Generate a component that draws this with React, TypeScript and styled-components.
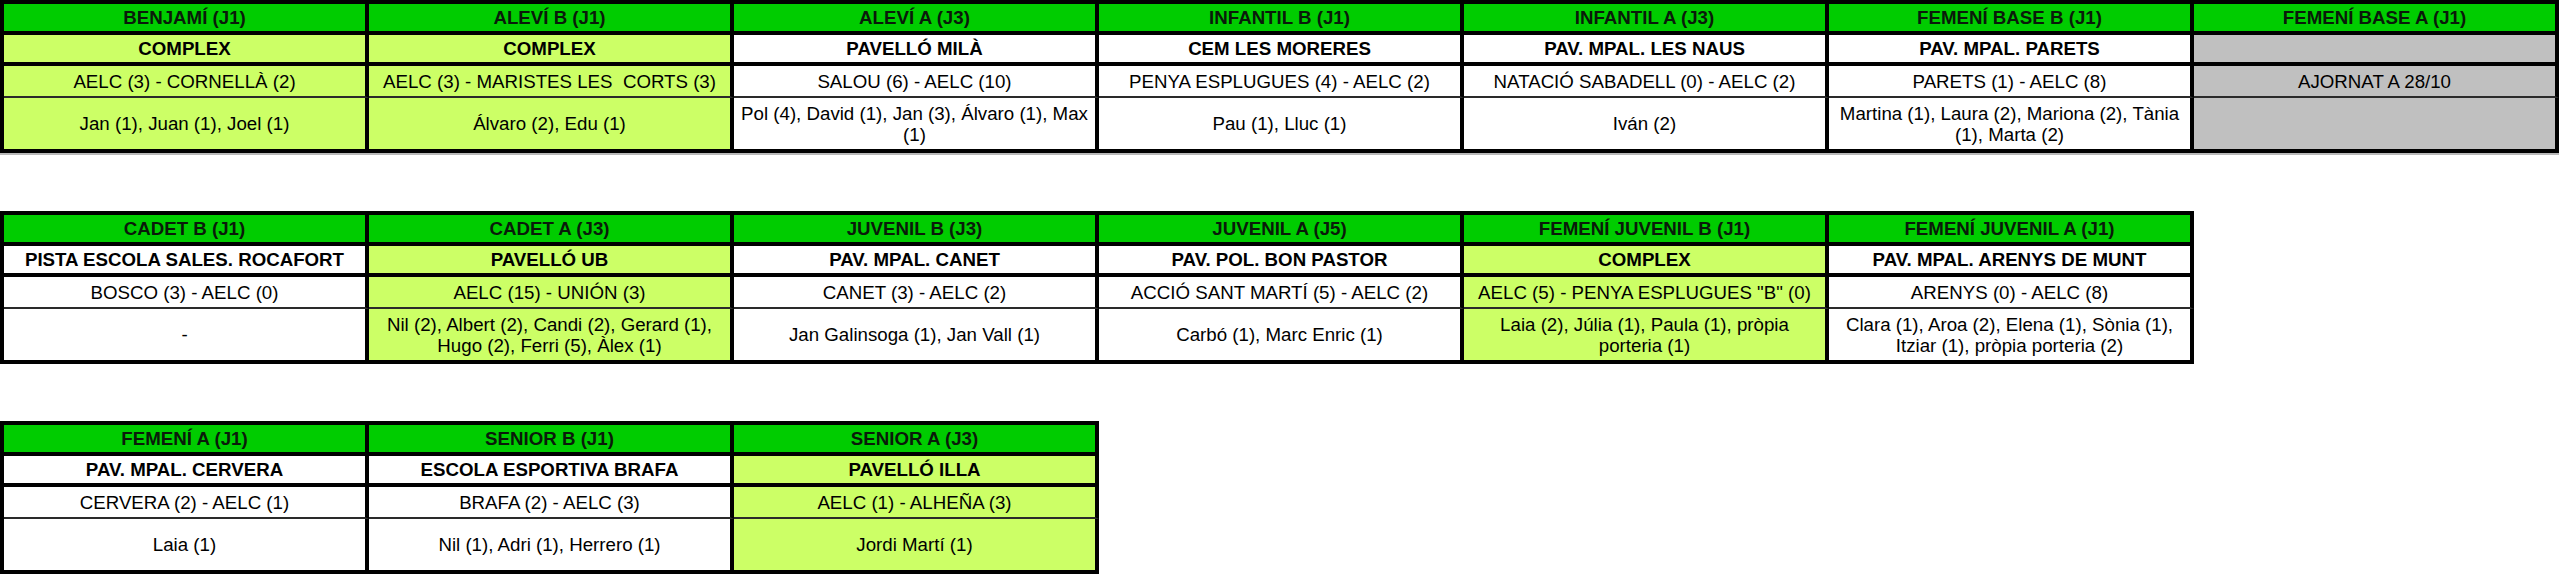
import React from "react";
import styled, { createGlobalStyle } from "styled-components";

type Tone = "white" | "lime" | "grey";

interface Match {
  title: string;
  venue: string;
  score: string;
  scorers: string;
  tone: Tone;
}

const tones: Record<Tone, string> = {
  white: "#ffffff",
  lime: "#ccff66",
  grey: "#c0c0c0",
};

const firstRound: Match[] = [
  { title: "BENJAMÍ (J1)", venue: "COMPLEX", score: "AELC (3) - CORNELLÀ (2)", scorers: "Jan (1), Juan (1), Joel (1)", tone: "lime" },
  { title: "ALEVÍ B (J1)", venue: "COMPLEX", score: "AELC (3) - MARISTES LES\u00a0 CORTS (3)", scorers: "Álvaro (2), Edu (1)", tone: "lime" },
  { title: "ALEVÍ A (J3)", venue: "PAVELLÓ MILÀ", score: "SALOU (6) - AELC (10)", scorers: "Pol (4), David (1), Jan (3), Álvaro (1), Max (1)", tone: "white" },
  { title: "INFANTIL B (J1)", venue: "CEM LES MORERES", score: "PENYA ESPLUGUES (4) - AELC (2)", scorers: "Pau (1), Lluc (1)", tone: "white" },
  { title: "INFANTIL A (J3)", venue: "PAV. MPAL. LES NAUS", score: "NATACIÓ SABADELL (0) - AELC (2)", scorers: "Iván (2)", tone: "white" },
  { title: "FEMENÍ BASE B (J1)", venue: "PAV. MPAL. PARETS", score: "PARETS (1) - AELC (8)", scorers: "Martina (1), Laura (2), Mariona (2), Tània (1), Marta (2)", tone: "white" },
  { title: "FEMENÍ BASE A (J1)", venue: "", score: "AJORNAT A 28/10", scorers: "", tone: "grey" },
];

const secondRound: Match[] = [
  { title: "CADET B (J1)", venue: "PISTA ESCOLA SALES. ROCAFORT", score: "BOSCO (3) - AELC (0)", scorers: "-", tone: "white" },
  { title: "CADET A (J3)", venue: "PAVELLÓ UB", score: "AELC (15) - UNIÓN (3)", scorers: "Nil (2), Albert (2), Candi (2), Gerard (1), Hugo (2), Ferri (5), Àlex (1)", tone: "lime" },
  { title: "JUVENIL B (J3)", venue: "PAV. MPAL. CANET", score: "CANET (3) - AELC (2)", scorers: "Jan Galinsoga (1), Jan Vall (1)", tone: "white" },
  { title: "JUVENIL A (J5)", venue: "PAV. POL. BON PASTOR", score: "ACCIÓ SANT MARTÍ (5) - AELC (2)", scorers: "Carbó (1), Marc Enric (1)", tone: "white" },
  { title: "FEMENÍ JUVENIL B (J1)", venue: "COMPLEX", score: "AELC (5) - PENYA ESPLUGUES \"B\" (0)", scorers: "Laia (2), Júlia (1), Paula (1), pròpia porteria (1)", tone: "lime" },
  { title: "FEMENÍ JUVENIL A (J1)", venue: "PAV. MPAL. ARENYS DE MUNT", score: "ARENYS (0) - AELC (8)", scorers: "Clara (1), Aroa (2), Elena (1), Sònia (1), Itziar (1), pròpia porteria (2)", tone: "white" },
];

const thirdRound: Match[] = [
  { title: "FEMENÍ A (J1)", venue: "PAV. MPAL. CERVERA", score: "CERVERA (2) - AELC (1)", scorers: "Laia (1)", tone: "white" },
  { title: "SENIOR B (J1)", venue: "ESCOLA ESPORTIVA BRAFA", score: "BRAFA (2) - AELC (3)", scorers: "Nil (1), Adri (1), Herrero (1)", tone: "white" },
  { title: "SENIOR A (J3)", venue: "PAVELLÓ ILLA", score: "AELC (1) - ALHEÑA (3)", scorers: "Jordi Martí (1)", tone: "lime" },
];

const ResultsTable: React.FC<{ matches: Match[]; offset: number; shadow?: boolean }> = ({
  matches,
  offset,
  shadow,
}) => (
  <Table $cols={matches.length} $offset={offset} $shadow={shadow}>
    {matches.map((m) => (
      <Header key={"h" + m.title}>{m.title}</Header>
    ))}
    {matches.map((m) => (
      <Venue key={"v" + m.title} $tone={m.tone}>
        {m.venue}
      </Venue>
    ))}
    {matches.map((m) => (
      <Score key={"s" + m.title} $tone={m.tone}>
        {m.score}
      </Score>
    ))}
    {matches.map((m) => (
      <Scorers key={"g" + m.title} $tone={m.tone}>
        {m.scorers}
      </Scorers>
    ))}
  </Table>
);

const App: React.FC = () => {
  return (
    <>
      <GlobalStyle />
      <Page>
        <ResultsTable matches={firstRound} offset={0} shadow />
        <ResultsTable matches={secondRound} offset={58} />
        <ResultsTable matches={thirdRound} offset={57} />
      </Page>
    </>
  );
};

export default App;

const GlobalStyle = createGlobalStyle`
  html, body {
    margin: 0;
    padding: 0;
    background: #ffffff;
  }
  body {
    font-family: "Liberation Sans", Arial, sans-serif;
    color: #000000;
  }
`;

const Page = styled.div`
  display: flex;
  flex-direction: column;
  align-items: flex-start;
  width: 2560px;
  height: 579px;
  overflow: hidden;
`;

const Table = styled.div<{ $cols: number; $offset: number; $shadow?: boolean }>`
  display: grid;
  grid-template-columns: repeat(${(p) => p.$cols}, 365px);
  grid-template-rows: 31px 31px 32px 55px;
  margin-top: ${(p) => p.$offset}px;
  border-top: 4px solid #000;
  border-left: 4px solid #000;
  box-shadow: ${(p) => (p.$shadow ? "0 2px 0 #b8b8b8" : "none")};
`;

const Cell = styled.div<{ $tone?: Tone }>`
  box-sizing: border-box;
  display: flex;
  align-items: center;
  justify-content: center;
  text-align: center;
  padding: 0 2px;
  border-right: 4px solid #000;
  border-bottom: 4px solid #000;
  background: ${(p) => tones[p.$tone ?? "white"]};
  font-size: 18.7px;
  line-height: 21px;
`;

const Header = styled(Cell)`
  background: #00cc00;
  font-weight: bold;
  color: #0a1a0a;
`;

const Venue = styled(Cell)`
  font-weight: bold;
`;

const Score = styled(Cell)`
  border-bottom: 2px solid #2a2a2a;
`;

const Scorers = styled(Cell)``;
